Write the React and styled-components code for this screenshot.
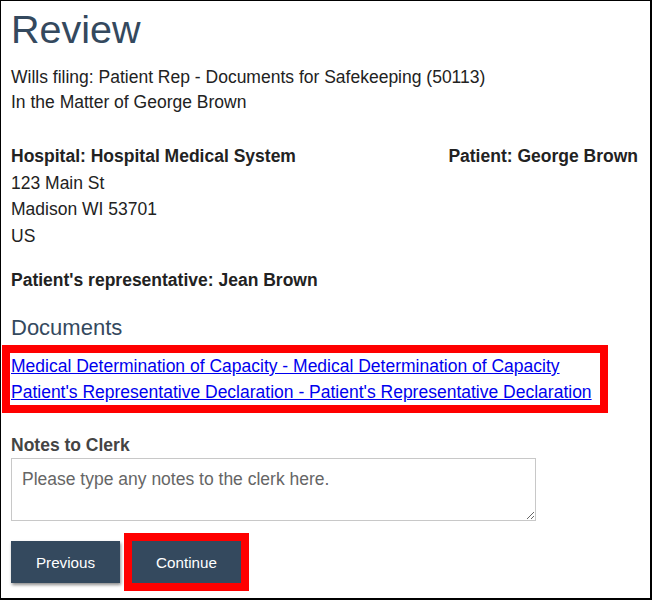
import React from "react";
import styled, { createGlobalStyle } from "styled-components";

const Global = createGlobalStyle`
  html, body { margin: 0; padding: 0; background: #fff; }
  body { font-family: "Liberation Sans", Arial, sans-serif; }
  * { box-sizing: border-box; }
`;

const Page = styled.div`
  width: 652px;
  height: 600px;
  border-style: solid;
  border-color: #000;
  border-width: 1px 2px 2px 1px;
  padding: 6px 12px 0 10px;
  font-size: 17.5px;
  color: #222;
  overflow: hidden;
`;

const Title = styled.h1`
  margin: 0;
  font-size: 39.5px;
  line-height: 44px;
  font-weight: 400;
  color: #34495e;
`;

const Intro = styled.p`
  margin: 14px 0 0;
  line-height: 25px;
`;

const PartyRow = styled.div`
  margin-top: 28px;
  display: flex;
  justify-content: space-between;
  align-items: flex-start;
  line-height: 26px;
`;

const Address = styled.div`
  display: flex;
  flex-direction: column;
  line-height: 26.5px;
`;

const Strong = styled.strong`
  font-weight: 700;
`;

const Rep = styled.p`
  margin: 18px 0 0;
  line-height: 26px;
  font-weight: 700;
`;

const SectionTitle = styled.h2`
  margin: 23px 0 0;
  font-size: 22px;
  line-height: 24px;
  font-weight: 400;
  color: #34495e;
`;

const DocList = styled.div`
  margin: 13px 0 0 -1px;
  display: inline-flex;
  flex-direction: column;
  padding: 0 8px 0 1px;
  line-height: 26px;
  outline: ${(p) => (p.$highlight ? "8px solid #ff0000" : "none")};
`;

const DocLink = styled.a`
  color: #0000ee;
  text-decoration: underline;
`;

const Label = styled.label`
  display: block;
  margin-top: 27px;
  font-weight: 700;
  line-height: 26px;
  color: #444;
`;

const Notes = styled.textarea`
  display: block;
  width: 525px;
  height: 63px;
  margin: 0;
  padding: 7px 10px;
  border: 1px solid #c8c8c8;
  border-radius: 0;
  font-family: inherit;
  font-size: 17.5px;
  line-height: 26px;
  color: #333;
  &::placeholder { color: #666; opacity: 1; }
`;

const Actions = styled.div`
  margin: 20px 0 0;
  display: flex;
  gap: 12px;
`;

const Button = styled.button`
  width: 109px;
  height: 42px;
  border: none;
  border-radius: 0;
  background: #34495e;
  color: #fff;
  font-family: inherit;
  font-size: 15.2px;
  box-shadow: 1px 2px 3px rgba(0, 0, 0, 0.45);
  cursor: pointer;
  outline: ${(p) => (p.$highlight ? "8px solid #ff0000" : "none")};
`;

export default function App() {
  return (
    <>
      <Global />
      <Page>
        <Title>Review</Title>
        <Intro>
          Wills filing: Patient Rep - Documents for Safekeeping (50113)
          <br />
          In the Matter of George Brown
        </Intro>
        <PartyRow>
          <Address>
            <Strong>Hospital: Hospital Medical System</Strong>
            <span>123 Main St</span>
            <span>Madison WI 53701</span>
            <span>US</span>
          </Address>
          <Strong>Patient: George Brown</Strong>
        </PartyRow>
        <Rep>Patient's representative: Jean Brown</Rep>
        <SectionTitle>Documents</SectionTitle>
        <DocList $highlight>
          <DocLink href="#">
            Medical Determination of Capacity - Medical Determination of Capacity
          </DocLink>
          <DocLink href="#">
            Patient's Representative Declaration - Patient's Representative Declaration
          </DocLink>
        </DocList>
        <Label htmlFor="notes">Notes to Clerk</Label>
        <Notes id="notes" placeholder="Please type any notes to the clerk here." />
        <Actions>
          <Button>Previous</Button>
          <Button $highlight>Continue</Button>
        </Actions>
      </Page>
    </>
  );
}
